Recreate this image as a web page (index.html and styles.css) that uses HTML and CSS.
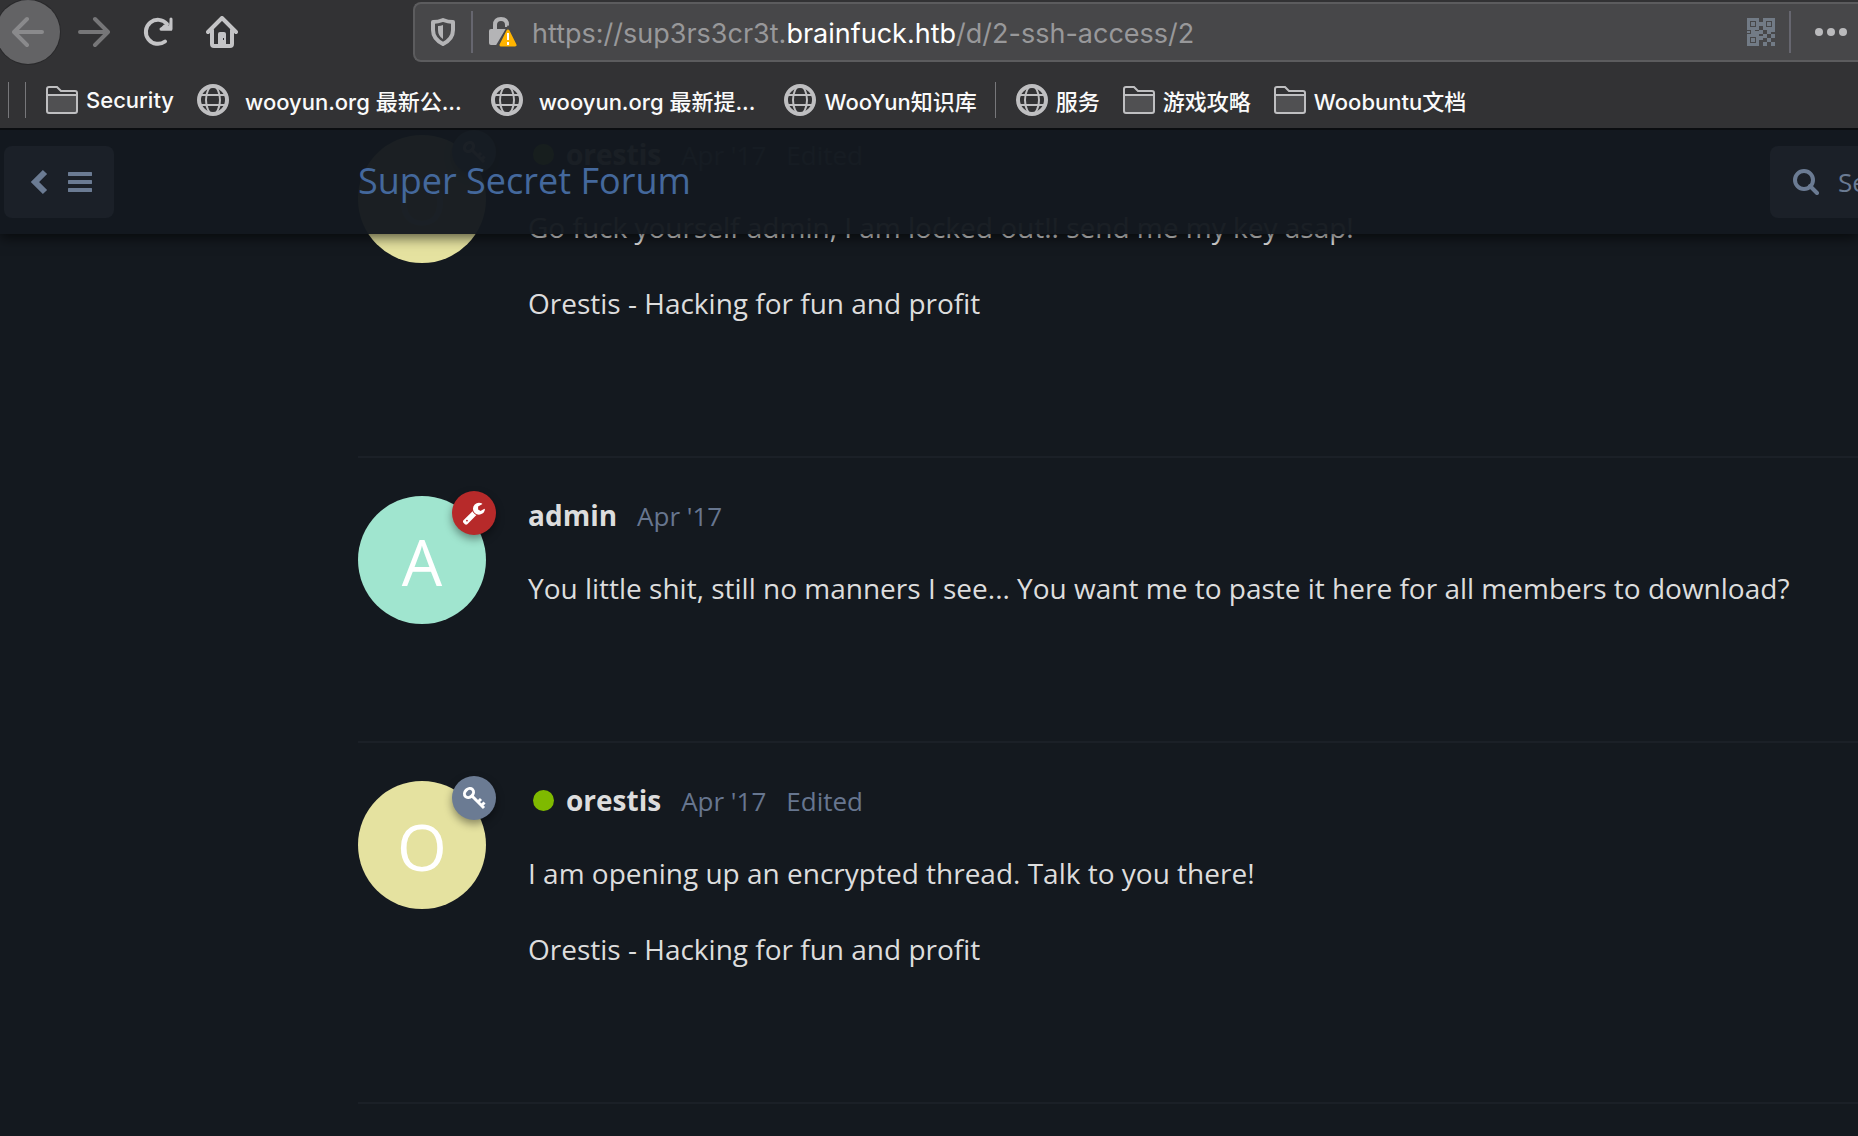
FILE: index.html
```
<!DOCTYPE html>
<html lang="en">
<head>
<meta charset="utf-8">
<title>ssh access - Super Secret Forum</title>
<link rel="stylesheet" href="styles.css">
</head>
<body>
<svg class="defs" aria-hidden="true">
  <symbol id="globe" viewBox="0 0 32 32"><g fill="none" stroke="#bfbfc1"><circle cx="16" cy="16" r="14" stroke-width="4"/><ellipse cx="16" cy="16" rx="7" ry="14" stroke-width="2"/><path d="M4 11h24M4 21h24" stroke-width="2"/></g></symbol>
  <symbol id="folder" viewBox="0 0 32 28"><path d="M1 25V3q0-2 2-2h8l4 4h14q2 0 2 2v18q0 2-2 2H3q-2 0-2-2z" fill="#505052"/><path d="M2 9V2h9l4 4h15v3z" fill="#323234"/><path d="M1 25V3q0-2 2-2h8l4 4h14q2 0 2 2v18q0 2-2 2H3q-2 0-2-2zM1 9h30" fill="none" stroke="#bfbfc1" stroke-width="2"/></symbol>
  <symbol id="key" viewBox="0 0 24 24"><g fill="none" stroke="#fff" stroke-width="3"><ellipse cx="7" cy="7" rx="5" ry="4" transform="rotate(-45 7 7)"/><path d="M10 10l12 12M16 16l3-3M19.500 19.500l3-3"/></g></symbol>
  <symbol id="wrench" viewBox="0 0 1792 1792"><path transform="matrix(1 0 0 -1 50 1536)" fill="#fff" d="M384 64q0 26-19 45t-45 19-45-19-19-45 19-45 45-19 45 19 19 45zM1028 484l-682-682q-37-37-90-37-52 0-91 37L59-90Q21-54 21 0q0 53 38 91l681 681q39-98 114.500-173.500t173.500-114.500zM1662 919q0-39-23-106-47-134-164.500-217.500T1216 512q-185 0-316.500 131.500T768 960t131.500 316.500T1216 1408q58 0 121.500-16.500T1445 1345q16-11 16-28t-16-28l-293-169V896l193-107q5 3 79 48.500t135.500 81T1630 954q15 0 23.500-10t8.500-25z"/></symbol>
</svg>

<div class="browser">
  <div class="toolbar">
    <div class="nav-buttons">
      <button class="nav back" aria-label="Back"><svg width="32" height="32" viewBox="0 0 32 32"><path d="M30 16H3M15 3L2 16l13 13" fill="none" stroke="#8a8a8c" stroke-width="4" stroke-linecap="round" stroke-linejoin="round"/></svg></button>
      <button class="nav" aria-label="Forward"><svg width="32" height="32" viewBox="0 0 32 32"><path d="M2 16h27M17 3l13 13-13 13" fill="none" stroke="#767678" stroke-width="4" stroke-linecap="round" stroke-linejoin="round"/></svg></button>
      <button class="nav" aria-label="Reload"><svg width="32" height="32" viewBox="0 0 32 32"><path d="M23 25.500A12 12 0 1 1 25 8" fill="none" stroke="#c4c4c6" stroke-width="4" stroke-linecap="round"/><path d="M29 2h1v12.500H18.500v-2.500L22 8.500l5 1z" fill="#c4c4c6"/><path d="M29 3v10H19" fill="none" stroke="#c4c4c6" stroke-width="3" stroke-linecap="round" stroke-linejoin="round"/></svg></button>
      <button class="nav" aria-label="Home"><svg width="32" height="32" viewBox="0 0 32 32"><path d="M2 16L16 2l14 14M6 14v14q0 2 2 2h16q2 0 2-2V14" fill="none" stroke="#c4c4c6" stroke-width="4" stroke-linecap="round" stroke-linejoin="round"/><path d="M12 29V18q0-2 2-2h4q2 0 2 2v11z" fill="#c4c4c6"/><path d="M17 22h1v2h-1z" fill="#323234"/></svg></button>
    </div>
    <div class="urlbar">
      <svg class="shield" width="24" height="28" viewBox="0 0 24 28"><path d="M12 2q5 2 10 2v8q0 9-10 14Q2 21 2 12V4q5 0 10-2z" fill="none" stroke="#b4b4b6" stroke-width="4" stroke-linejoin="round"/><path d="M12 7v14q-5-3-5-9V8q3 0 5-1z" fill="#b4b4b6"/></svg>
      <span class="bar"></span>
      <svg class="lock" width="28" height="30" viewBox="0 0 28 30"><path d="M6 13V8q0-6 6-6t6 6v2" fill="none" stroke="#b4b4b6" stroke-width="4"/><rect y="12" width="18" height="16" rx="2" fill="#b4b4b6"/><path d="M19 8L6 30h22V18z" fill="#474749"/><path d="M19 14l7 14H12z" fill="#ffb400" stroke="#ffb400" stroke-width="3" stroke-linejoin="round"/><path d="M19 16v7M19 25v3" stroke="#fff" stroke-width="2"/></svg>
      <a class="url" href="#">https://sup3rs3cr3t.<strong>brainfuck.htb</strong>/d/2-ssh-access/2</a>
      <svg class="qr" width="28" height="28" viewBox="0 0 28 28"><g fill="none" stroke="#727b86" stroke-width="3"><path d="M1.500 1.500h9v9h-9zM17.500 1.500h9v9h-9zM1.500 17.500h9v9h-9z"/></g><path fill="#727b86" d="M4 4h4v4H4zM20 4h4v4h-4zM4 20h4v4H4zM12 4h4v4h-4zM4 12h4v4H4zM0 13h3v2H0zM12 12h4v4h-4zM20 12h4v4h-4zM16 16h4v4h-4zM24 16h4v4h-4zM12 18h4v4h-4zM20 20h4v4h-4zM16 24h4v4h-4zM24 24h4v4h-4zM8 13h4v3H8zM24 12h4v2h-4z"/></svg>
      <span class="bar"></span>
      <svg class="dots" width="32" height="8" viewBox="0 0 32 8"><g fill="#bababc"><circle cx="4" cy="4" r="4"/><circle cx="16" cy="4" r="4"/><circle cx="28" cy="4" r="4"/></g></svg>
    </div>
  </div>
  <nav class="bookmarks">
    <span class="rule"></span><span class="rule second"></span>
    <a href="#"><svg width="32" height="28"><use href="#folder"/></svg>Security</a>
    <a href="#" class="wide"><svg width="32" height="32"><use href="#globe"/></svg>wooyun.org 最新公...</a>
    <a href="#" class="wide"><svg width="32" height="32"><use href="#globe"/></svg>wooyun.org 最新提...</a>
    <a href="#"><svg width="32" height="32"><use href="#globe"/></svg>WooYun知识库</a>
    <span class="rule third"></span>
    <a href="#"><svg width="32" height="32"><use href="#globe"/></svg>服务</a>
    <a href="#"><svg width="32" height="28"><use href="#folder"/></svg>游戏攻略</a>
    <a href="#"><svg width="32" height="28"><use href="#folder"/></svg>Woobuntu文档</a>
  </nav>
</div>

<div class="page">
  <header class="forum-header">
    <button class="drawer" aria-label="Back to discussions"><svg width="18" height="26" viewBox="0 0 18 26"><path d="M15 3L5 13l10 10" fill="none" stroke="#6b7b93" stroke-width="6"/></svg><svg width="24" height="20" viewBox="0 0 24 20"><path d="M1 2h22M1 10h22M1 18h22" stroke="#6b7b93" stroke-width="4" stroke-linecap="round"/></svg></button>
    <h1><a href="#">Super Secret Forum</a></h1>
    <label class="search"><svg width="26" height="26" viewBox="0 0 26 26"><circle cx="11" cy="11" r="9" fill="none" stroke="#6b7b93" stroke-width="4"/><path d="M17 17l7 7" stroke="#6b7b93" stroke-width="4" stroke-linecap="round"/></svg><input type="text" placeholder="Search Forum" aria-label="Search Forum"></label>
  </header>
  <main class="stream">
    <article class="post">
      <div class="avatar yellow">O<span class="badge mod"><svg width="24" height="24"><use href="#key"/></svg></span></div>
      <div class="content">
        <div class="meta"><span class="online"></span><strong>orestis</strong><time>Apr '17</time><span>Edited</span></div>
        <p>Go fuck yourself admin, I am locked out!! send me my key asap!</p>
        <p>Orestis - Hacking for fun and profit</p>
      </div>
    </article>
    <article class="post">
      <div class="avatar green">A<span class="badge admin"><svg width="24" height="24"><use href="#wrench"/></svg></span></div>
      <div class="content">
        <div class="meta"><strong>admin</strong><time>Apr '17</time></div>
        <p>You little shit, still no manners I see... You want me to paste it here for all members to download?</p>
      </div>
    </article>
    <article class="post">
      <div class="avatar yellow">O<span class="badge mod"><svg width="24" height="24"><use href="#key"/></svg></span></div>
      <div class="content">
        <div class="meta"><span class="online"></span><strong>orestis</strong><time>Apr '17</time><span>Edited</span></div>
        <p>I am opening up an encrypted thread. Talk to you there!</p>
        <p>Orestis - Hacking for fun and profit</p>
      </div>
    </article>
    <div class="post-end"></div>
  </main>
</div>
</body>
</html>
```
FILE: styles.css
```
* { box-sizing: border-box; }

body {
  margin: 0;
  height: 100vh;
  display: flex;
  flex-direction: column;
  overflow: hidden;
  background: #14191f;
  color: #ddd;
  font-family: "Open Sans", "Noto Sans", sans-serif;
  font-size: 28px;
}

a { color: inherit; text-decoration: none; }
button { border: 0; padding: 0; background: none; font: inherit; }
svg { flex: none; display: block; }
.defs { position: absolute; width: 0; height: 0; }

/* Browser toolbar */
.browser {
  flex: none;
  background: #323234;
  border-bottom: 2px solid #0b0d10;
  font-family: Inter, "Noto Sans CJK SC", sans-serif;
}

.toolbar { display: flex; padding-top: 2px; }
.nav-buttons { flex: none; width: 413px; height: 60px; display: flex; align-items: center; }
.nav { width: 64px; height: 64px; display: flex; align-items: center; justify-content: center; flex: none; }
.back { margin: 0 2px 0 -4px; border-radius: 50%; background: #636365; box-shadow: 0 0 0 1px #29292b; }

.urlbar {
  flex: 1;
  min-width: 0;
  height: 60px;
  display: flex;
  align-items: center;
  padding: 0 11px 0 16px;
  border: 2px solid #5c5c5e;
  border-right: 0;
  border-radius: 8px 0 0 8px;
  background: #474749;
}
.bar { flex: none; width: 2px; height: 42px; margin: 0 16px; background: #66666f; }
.url { flex: 1; min-width: 0; margin-left: 15px; padding-top: 2px; color: #98989a; font-size: 27px; white-space: nowrap; overflow: hidden; }
.url strong { color: #fff; font-weight: 400; }
.urlbar .dots { margin-left: 8px; }
.qr { margin-right: -2px; }

.bookmarks { height: 66px; padding: 10px 0 0 8px; display: flex; align-items: center; color: #fafafa; font-size: 22px; font-weight: 500; white-space: nowrap; }
.bookmarks a { display: flex; align-items: center; gap: 8px; margin-right: 23px; }
.bookmarks .wide { gap: 16px; margin-right: 29px; }
.rule { width: 1px; height: 36px; background: #77777a; }
.second { margin: 0 20px 0 16px; }
.third { margin: 0 20px 0 -5px; }

/* Forum */
.page { position: relative; flex: 1; min-height: 0; overflow: hidden; }

.forum-header {
  position: absolute;
  z-index: 2;
  top: 0;
  left: 0;
  right: 0;
  height: 104px;
  display: grid;
  grid-template-columns: 354px 1fr 88px;
  align-items: center;
  padding-left: 4px;
  background: rgba(20, 25, 31, 0.97);
  box-shadow: 0 4px 12px rgba(0, 0, 0, 0.6);
}
.drawer { width: 110px; height: 72px; display: flex; align-items: center; gap: 20px; padding-left: 26px; border-radius: 8px; background: #1b2028; }
.forum-header h1 { margin: 0; padding-bottom: 2px; font-size: 36px; font-weight: 400; line-height: 48px; color: #44689c; }
.search { height: 72px; display: flex; align-items: center; gap: 19px; padding-left: 23px; border-radius: 8px 0 0 8px; background: #1b2028; overflow: hidden; }
.search input { width: 100%; min-width: 0; padding: 0; border: 0; background: none; color: #ddd; font: 26px "Open Sans", sans-serif; }
.search input::placeholder { color: #6b7b93; opacity: 1; }

.stream { margin: -35px 0 0 358px; }
.post { display: flex; align-items: flex-start; gap: 42px; padding: 38px 0 117px; border-top: 2px solid #1b2027; }
.post-end { border-top: 2px solid #1b2027; }

.avatar { position: relative; flex: none; width: 128px; height: 128px; border-radius: 50%; color: #fff; font-size: 64px; line-height: 132px; text-align: center; }
.yellow { background: #e5e2a0; }
.green { background: #a0e5cf; }
.badge { position: absolute; top: -5px; right: -10px; width: 44px; height: 44px; display: flex; align-items: center; justify-content: center; border-radius: 50%; box-shadow: 0 4px 8px rgba(0, 0, 0, 0.4); }
.mod { background: #6b7b93; }
.admin { background: #b72a2a; }

.content { flex: 1; min-width: 0; padding-bottom: 12px; }
.meta { height: 38px; margin-bottom: 30px; display: flex; align-items: baseline; gap: 20px; line-height: 38px; font-size: 26px; color: #67768f; }
.meta strong { font-size: 28px; font-weight: 700; color: #ddd; }
.online { width: 21px; height: 21px; margin: 0 -8px 0 5px; align-self: center; border-radius: 50%; background: #7fba00; }
.content p { margin: 0 0 28px; line-height: 48px; white-space: nowrap; }
.content p:last-child { margin: 0; }
```
